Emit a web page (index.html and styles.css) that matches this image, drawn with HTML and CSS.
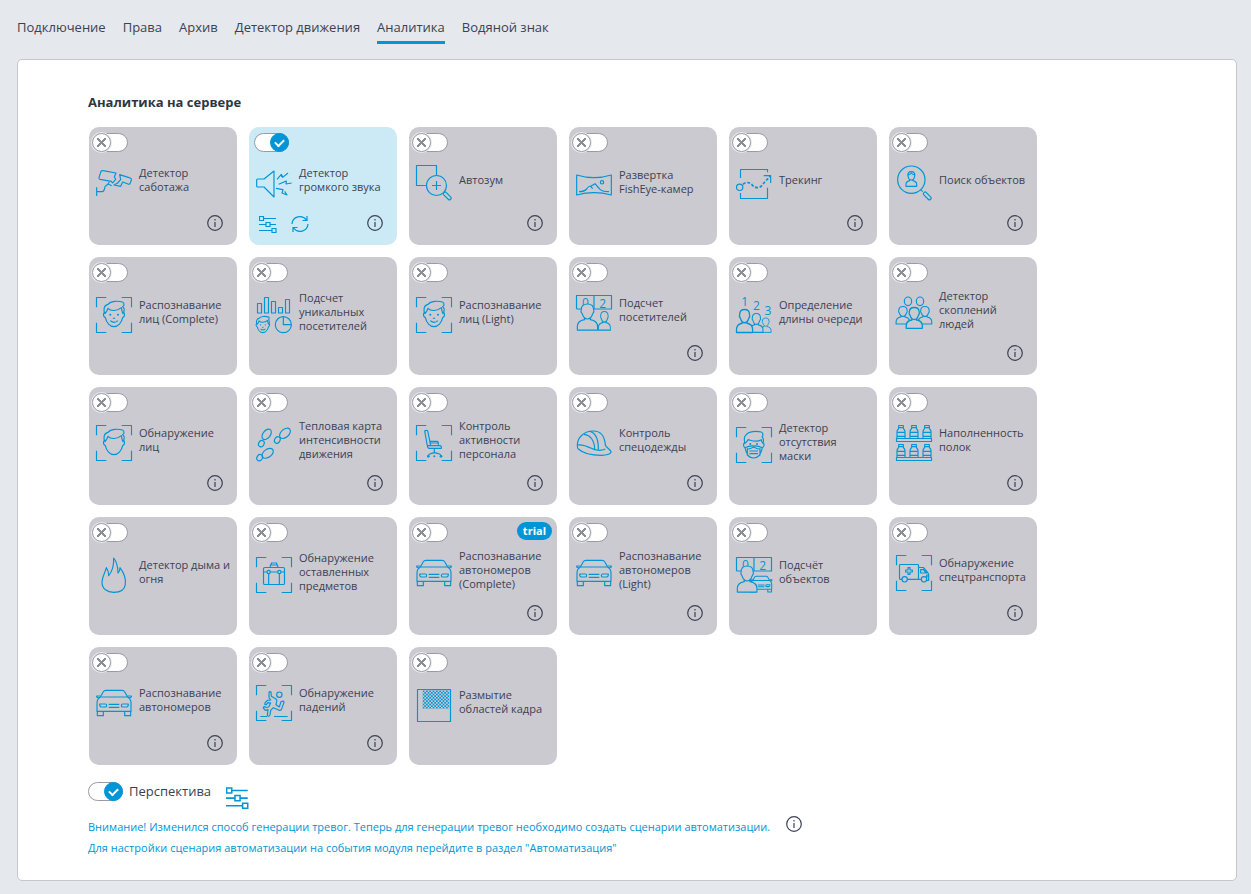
FILE: index.html
```html
<!DOCTYPE html>
<html lang="ru">
<head>
<meta charset="utf-8">
<title>Аналитика</title>
<link rel="stylesheet" href="styles.css">
</head>
<body>
<svg class="sprite" aria-hidden="true">
  <defs>
    <pattern id="checker" width="10" height="10" patternUnits="userSpaceOnUse"><path class="solid" d="M0 0h5v5h-5zM5 5h5v5h-5z"/></pattern>
    <g id="frame"><path d="M1.500 31V1.500H31M77 1.500H106.500V31M106.500 77V106.500H77M31 106.500H1.500V77"/></g>
    <g id="head">
      <path d="M26 46C20 49 22 60 28 62C31 77 42 89 54 89C66 89 77 77 80 62C86 60 88 49 82 46"/>
      <path d="M27 50C31 46 33 41 36 34C44 44 64 42 76 32C77 40 79 46 81 50C86 42 86 32 80 29C86 24 85 17 79 15C66 11 44 12 36 22C24 24 21 38 27 50Z"/>
    </g>
    <g id="face">
      <use href="#head"/>
      <path d="M43 71Q54 81 66 71M51 63Q54 65 57 63"/>
      <circle class="solid" cx="43" cy="53" r="3"/><circle class="solid" cx="66" cy="53" r="3"/>
    </g>
    <g id="person">
      <path class="mask" d="M24 45V50C10 52 2 60 2 72V82H64V72C64 60 56 52 42 50V45"/>
      <path class="mask" d="M33 2C19 2 14 9 14 20C12 24 15 30 17 32C20 42 27 48 33 48C39 48 46 42 49 32C51 30 54 24 52 20C52 9 47 2 33 2Z"/>
    </g>
    <g id="car">
      <path class="mask" d="M13 36L22 20Q24 16 30 16H78Q84 16 86 20L95 36Q105 42 105 54V79H3V54Q3 42 13 36Z"/>
      <path d="M13 36H95M10 40L2 36V33H13M98 40L106 36V33H95M4 79V92H22V79M86 79V92H104V79M38 58H70M38 67H70"/>
      <path d="M11 57H28Q32 57 32 62Q32 66 28 66H16Q11 66 11 57ZM97 57H80Q76 57 76 62Q76 66 80 66H92Q97 66 97 57Z"/>
    </g>
    <g id="bottle">
      <path d="M8 1.500H22V8H8ZM8 8C8 14 3 13 3 20V40M22 8C22 14 27 13 27 20V40M3 22H27M3 34H27"/>
    </g>
    <g id="shelf">
      <use href="#bottle"/><use href="#bottle" x="39"/><use href="#bottle" x="78"/>
      <path d="M1.500 40.500H106.500V49.500H1.500Z"/>
    </g>
    <g id="board">
      <path d="M1.500 42V1.500H106.500V42H1.500M54 1.500V42"/>
      <text x="28" y="36">0</text><text x="80" y="38">2</text>
    </g>
    <g id="lens">
      <rect x="-5" y="0" width="10" height="28" rx="4" transform="translate(84 83) rotate(-45)"/>
    </g>
    <symbol id="i-info" viewBox="0 0 16 16"><circle cx="8" cy="8" r="7.300"/><path d="M8 7V12M8 4V5.500"/></symbol>
    <symbol id="i-sliders" viewBox="0 0 18 18"><path d="M.5 1.500H4.500V5.500H.5ZM4.500 3.500H17M0 9.500H7M7 7.500H11V11.500H7ZM11 9.500H17M0 15.500H13M13 13.500H17V17.500H13Z"/></symbol>
    <symbol id="i-refresh" viewBox="0 0 18 18"><path d="M1 9C1.500 1.500 11 -1 15.500 5M16 1V5.500H11.500M17 9C16.500 16.500 7 19 2.500 13M2 17V12.500H6.500"/></symbol>
  </defs>
</svg>

<nav class="tabs">
  <a class="tab" href="#">Подключение</a>
  <a class="tab" href="#">Права</a>
  <a class="tab" href="#">Архив</a>
  <a class="tab" href="#">Детектор движения</a>
  <a class="tab tab-active" href="#" aria-current="page">Аналитика</a>
  <a class="tab" href="#">Водяной знак</a>
</nav>

<main class="panel">
  <h1 class="title">Аналитика на сервере</h1>
  <div class="grid">

    <section class="card has-info">
      <input class="toggle" type="checkbox" id="m1">
      <div class="body">
        <svg class="icon" viewBox="0 0 108 108"><path d="M15 19Q17 16 21 17L60 24L55 35L59 43L50 54L46 49L12 43Q8 42 9 38Z"/><path d="M71 29L99 38Q108 40 106 45L102 56Q100 59 96 57L80 51L74 64L54 60L65 54L74 44Z"/><path d="M40 51L36 57L47 62M36 57L27 65Q25 80 18 80H2M2 67V93"/></svg>
        <label class="name" for="m1">Детектор саботажа</label>
      </div>
      <div class="foot"><button class="tool info" type="button" aria-label="Информация"><svg class="glyph"><use href="#i-info"/></svg></button></div>
    </section>

    <section class="card card-on has-info">
      <input class="toggle" type="checkbox" id="m2" checked>
      <div class="body">
        <svg class="icon" viewBox="0 0 108 108"><path d="M5 42H24L54 18V96L24 66H5Q2 66 2 63V45Q2 42 5 42Z"/><path d="M63 43L76 28L80 37L96 24M75 31L80 37M107 54L90 57L91 48L68 58M60 70L81 74L78 84L93 90L86 79"/></svg>
        <label class="name" for="m2">Детектор громкого звука</label>
      </div>
      <div class="foot">
        <button class="tool" type="button" aria-label="Настройки"><svg class="glyph-wide"><use href="#i-sliders"/></svg></button>
        <button class="tool" type="button" aria-label="Обновить"><svg class="glyph-wide"><use href="#i-refresh"/></svg></button>
        <button class="tool info" type="button" aria-label="Информация"><svg class="glyph"><use href="#i-info"/></svg></button>
      </div>
    </section>

    <section class="card has-info">
      <input class="toggle" type="checkbox" id="m3">
      <div class="body">
        <svg class="icon" viewBox="0 0 108 108"><path d="M32 61.500H1.500V1.500H61.500V31M61.500 48V75M48 61.500H75"/><circle cx="61.500" cy="61.500" r="30"/><use href="#lens"/></svg>
        <label class="name" for="m3">Автозум</label>
      </div>
      <div class="foot"><button class="tool info" type="button" aria-label="Информация"><svg class="glyph"><use href="#i-info"/></svg></button></div>
    </section>

    <section class="card">
      <input class="toggle" type="checkbox" id="m4">
      <div class="body">
        <svg class="icon" viewBox="0 0 108 108"><path d="M2 24Q54 40 106 24V84Q54 70 2 84ZM9 74Q25 74 32 66Q38 56 44 58L50 65M44 58L57 50L71 66Q77 74 99 74"/><circle cx="78" cy="46" r="5"/></svg>
        <label class="name" for="m4">Развертка FishEye-камер</label>
      </div>
      <div class="foot"></div>
    </section>

    <section class="card has-info">
      <input class="toggle" type="checkbox" id="m5">
      <div class="body">
        <svg class="icon" viewBox="0 0 108 108"><path d="M13.500 39V13.500H94.500V22M13.500 84V100.500H94.500V68M83 32H104V54"/><circle cx="11" cy="67" r="9.500"/><path class="dashed" d="M21 58C28 51 40 50 48 59C56 70 72 72 80 58L102 34"/></svg>
        <label class="name" for="m5">Трекинг</label>
      </div>
      <div class="foot"><button class="tool info" type="button" aria-label="Информация"><svg class="glyph"><use href="#i-info"/></svg></button></div>
    </section>

    <section class="card has-info">
      <input class="toggle" type="checkbox" id="m6">
      <div class="body">
        <svg class="icon" viewBox="0 0 108 108"><circle cx="46" cy="44" r="41"/><path d="M46 20C38 20 34 25 36 33C37 40 42 45 46 45C50 45 55 40 56 33C58 25 54 20 46 20ZM41 44V47C33 49 30 52 30 58V64H62V58C62 52 59 49 51 47V44M36 30Q44 28 46 24Q50 29 56 30M74 74L80 80"/><use href="#lens"/></svg>
        <label class="name" for="m6">Поиск объектов</label>
      </div>
      <div class="foot"><button class="tool info" type="button" aria-label="Информация"><svg class="glyph"><use href="#i-info"/></svg></button></div>
    </section>

    <section class="card">
      <input class="toggle" type="checkbox" id="m7">
      <div class="body">
        <svg class="icon" viewBox="0 0 108 108"><use href="#frame"/><use href="#face"/></svg>
        <label class="name" for="m7">Распознавание лиц (Complete)</label>
      </div>
      <div class="foot"></div>
    </section>

    <section class="card">
      <input class="toggle" type="checkbox" id="m8">
      <div class="body">
        <svg class="icon" viewBox="0 0 108 108"><path d="M4.500 19.500H16.500V48H4.500ZM25.500 1.500H37.500V48H25.500ZM46.500 13.500H58.500V48H46.500ZM67.500 31.500H79.500V48H67.500ZM88.500 7.500H100.500V48H88.500Z"/><circle cx="82" cy="83" r="24"/><path d="M82 59V83H106"/><g class="fine" transform="translate(-14 50) scale(.64)"><use href="#face"/></g></svg>
        <label class="name" for="m8">Подсчет уникальных посетителей</label>
      </div>
      <div class="foot"></div>
    </section>

    <section class="card">
      <input class="toggle" type="checkbox" id="m9">
      <div class="body">
        <svg class="icon" viewBox="0 0 108 108"><use href="#frame"/><use href="#face"/></svg>
        <label class="name" for="m9">Распознавание лиц (Light)</label>
      </div>
      <div class="foot"></div>
    </section>

    <section class="card has-info">
      <input class="toggle" type="checkbox" id="m10">
      <div class="body">
        <svg class="icon" viewBox="0 0 108 108"><use href="#board"/><g class="fine" transform="translate(66 48) scale(.58 .7)"><use href="#person"/></g><g transform="translate(2 25) scale(.98)"><use href="#person"/></g></svg>
        <label class="name" for="m10">Подсчет посетителей</label>
      </div>
      <div class="foot"><button class="tool info" type="button" aria-label="Информация"><svg class="glyph"><use href="#i-info"/></svg></button></div>
    </section>

    <section class="card">
      <input class="toggle" type="checkbox" id="m11">
      <div class="body">
        <svg class="icon" viewBox="0 0 108 108"><text x="26" y="26">1</text><text x="61" y="38">2</text><text x="96" y="53">3</text><g class="fine" transform="translate(72 62) scale(.52 .54)"><use href="#person"/></g><g class="fine" transform="translate(40 48) scale(.64 .71)"><use href="#person"/></g><g class="fine" transform="translate(0 36) scale(.78 .86)"><use href="#person"/></g></svg>
        <label class="name" for="m11">Определение длины очереди</label>
      </div>
      <div class="foot"></div>
    </section>

    <section class="card has-info">
      <input class="toggle" type="checkbox" id="m12">
      <div class="body">
        <svg class="icon" viewBox="0 0 108 108"><ellipse cx="36" cy="19" rx="11" ry="13"/><ellipse cx="72" cy="19" rx="11" ry="13"/><g class="fine" transform="translate(-1 33) scale(.66)"><use href="#person"/></g><g class="fine" transform="translate(65 33) scale(.66)"><use href="#person"/></g><g class="fine" transform="translate(29 36) scale(.78)"><use href="#person"/></g></svg>
        <label class="name name-narrow" for="m12">Детектор скоплений людей</label>
      </div>
      <div class="foot"><button class="tool info" type="button" aria-label="Информация"><svg class="glyph"><use href="#i-info"/></svg></button></div>
    </section>

    <section class="card has-info">
      <input class="toggle" type="checkbox" id="m13">
      <div class="body">
        <svg class="icon" viewBox="0 0 108 108"><use href="#frame"/><use href="#head"/></svg>
        <label class="name" for="m13">Обнаружение лиц</label>
      </div>
      <div class="foot"><button class="tool info" type="button" aria-label="Информация"><svg class="glyph"><use href="#i-info"/></svg></button></div>
    </section>

    <section class="card has-info">
      <input class="toggle" type="checkbox" id="m14">
      <div class="body">
        <svg class="icon" viewBox="0 0 108 108"><ellipse cx="32" cy="28" rx="18" ry="11" transform="rotate(-52 32 28)"/><ellipse cx="16" cy="56" rx="10" ry="8" transform="rotate(-60 16 56)"/><ellipse cx="87" cy="25" rx="19" ry="12" transform="rotate(-42 87 25)"/><ellipse cx="64" cy="45" rx="10" ry="8" transform="rotate(-60 64 45)"/><ellipse cx="35" cy="85" rx="19" ry="12" transform="rotate(-36 35 85)"/><ellipse cx="11" cy="98" rx="10" ry="8" transform="rotate(-60 11 98)"/></svg>
        <label class="name" for="m14">Тепловая карта интенсивности движения</label>
      </div>
      <div class="foot"><button class="tool info" type="button" aria-label="Информация"><svg class="glyph"><use href="#i-info"/></svg></button></div>
    </section>

    <section class="card has-info">
      <input class="toggle" type="checkbox" id="m15">
      <div class="body">
        <svg class="icon" viewBox="0 0 108 108"><use href="#frame"/><path d="M26 18Q30 15 35 17L44 62H34ZM40 49H63Q67 49 67 53V60M44 54H66M34 62H72Q76 62 76 66V70H38Q35 68 34 62M55 70V83M37 93Q38 87 44 86L55 83L67 86Q74 87 75 93"/><circle class="solid" cx="37" cy="94" r="4"/><circle class="solid" cx="55" cy="94" r="3"/><circle class="solid" cx="75" cy="94" r="4"/></svg>
        <label class="name" for="m15">Контроль активности персонала</label>
      </div>
      <div class="foot"><button class="tool info" type="button" aria-label="Информация"><svg class="glyph"><use href="#i-info"/></svg></button></div>
    </section>

    <section class="card has-info">
      <input class="toggle" type="checkbox" id="m16">
      <div class="body">
        <svg class="icon" viewBox="0 0 108 108"><path d="M4 60C4 38 24 18 52 18C76 18 86 34 88 60C90 68 104 74 105 80C106 86 94 91 76 91C46 91 20 84 7 72C3 68 4 62 4 60ZM4 60C14 58 34 64 46 70C58 77 76 78 88 72M24 28C44 30 56 48 56 74M42 19C60 24 68 44 67 77"/></svg>
        <label class="name" for="m16">Контроль спецодежды</label>
      </div>
      <div class="foot"><button class="tool info" type="button" aria-label="Информация"><svg class="glyph"><use href="#i-info"/></svg></button></div>
    </section>

    <section class="card">
      <input class="toggle" type="checkbox" id="m17">
      <div class="body">
        <svg class="icon" viewBox="0 0 108 108"><use href="#frame"/><path d="M26 47C21 50 22 60 27 62C30 80 40 93 53 93C66 93 76 80 79 62C85 60 86 50 81 47M27 49C24 38 24 28 30 24C38 12 62 12 76 15C82 18 82 26 78 29C83 34 83 42 81 49C78 46 76 42 76 38C60 48 46 40 36 38C34 44 30 46 27 49ZM27 62Q40 56 53 57Q66 56 79 62M34 65C38 68 42 66 53 60C64 66 68 68 72 65V84Q62 93 53 93Q42 93 34 84ZM40 72H66M40 80H66"/><circle class="solid" cx="43" cy="51" r="3"/><circle class="solid" cx="63" cy="51" r="3"/></svg>
        <label class="name name-narrow" for="m17">Детектор отсутствия маски</label>
      </div>
      <div class="foot"></div>
    </section>

    <section class="card has-info">
      <input class="toggle" type="checkbox" id="m18">
      <div class="body">
        <svg class="icon" viewBox="0 0 108 108"><use href="#shelf"/><use href="#shelf" y="57"/></svg>
        <label class="name" for="m18">Наполненность полок</label>
      </div>
      <div class="foot"><button class="tool info" type="button" aria-label="Информация"><svg class="glyph"><use href="#i-info"/></svg></button></div>
    </section>

    <section class="card">
      <input class="toggle" type="checkbox" id="m19">
      <div class="body">
        <svg class="icon" viewBox="0 0 108 108"><path d="M53 3C62 14 66 28 66 48C70 44 72 38 72 32C84 48 90 66 88 82C86 98 72 106 53 106C34 106 18 96 18 76C18 58 28 46 31 32C35 38 38 46 38 56C48 44 54 26 53 3Z"/></svg>
        <label class="name" for="m19">Детектор дыма и огня</label>
      </div>
      <div class="foot"></div>
    </section>

    <section class="card">
      <input class="toggle" type="checkbox" id="m20">
      <div class="body">
        <svg class="icon" viewBox="0 0 108 108"><use href="#frame"/><rect x="22.500" y="31.500" width="63" height="51" rx="4"/><path d="M43 31V24H65V31M46 24V18H62V24M22 45H33M43 45H65M75 45H86M38 50V82M70 50V82"/><circle cx="38" cy="45" r="5"/><circle cx="70" cy="45" r="5"/></svg>
        <label class="name" for="m20">Обнаружение оставленных предметов</label>
      </div>
      <div class="foot"></div>
    </section>

    <section class="card has-info">
      <input class="toggle" type="checkbox" id="m21">
      <span class="badge">trial</span>
      <div class="body">
        <svg class="icon" viewBox="0 0 108 108"><use href="#car"/></svg>
        <label class="name" for="m21">Распознавание автономеров (Complete)</label>
      </div>
      <div class="foot"><button class="tool info" type="button" aria-label="Информация"><svg class="glyph"><use href="#i-info"/></svg></button></div>
    </section>

    <section class="card has-info">
      <input class="toggle" type="checkbox" id="m22">
      <div class="body">
        <svg class="icon" viewBox="0 0 108 108"><use href="#car"/></svg>
        <label class="name" for="m22">Распознавание автономеров (Light)</label>
      </div>
      <div class="foot"><button class="tool info" type="button" aria-label="Информация"><svg class="glyph"><use href="#i-info"/></svg></button></div>
    </section>

    <section class="card">
      <input class="toggle" type="checkbox" id="m23">
      <div class="body">
        <svg class="icon" viewBox="0 0 108 108"><use href="#board"/><g class="fine" transform="translate(42 48) scale(.62)"><use href="#car"/></g><g transform="translate(2 25) scale(.95 .98)"><use href="#person"/></g></svg>
        <label class="name" for="m23">Подсчёт объектов</label>
      </div>
      <div class="foot"></div>
    </section>

    <section class="card has-info">
      <input class="toggle" type="checkbox" id="m24">
      <div class="body">
        <svg class="icon" viewBox="0 0 108 108"><use href="#frame"/><path d="M18 73H13Q10.500 73 10.500 70V31Q10.500 28.500 13 28.500H64Q67.500 28.500 67.500 31V73H34M67 37.500H82L96 54Q98 57 98 60V76H92M76 73H67M74 44H82L91 54H74ZM98 60H92V66H98M36 38H42V45H49V51H42V58H36V51H29V45H36Z"/><circle cx="26" cy="73" r="8"/><circle cx="84" cy="73" r="8"/></svg>
        <label class="name" for="m24">Обнаружение спецтранспорта</label>
      </div>
      <div class="foot"><button class="tool info" type="button" aria-label="Информация"><svg class="glyph"><use href="#i-info"/></svg></button></div>
    </section>

    <section class="card has-info">
      <input class="toggle" type="checkbox" id="m25">
      <div class="body">
        <svg class="icon" viewBox="0 0 108 108"><use href="#car"/></svg>
        <label class="name" for="m25">Распознавание автономеров</label>
      </div>
      <div class="foot"><button class="tool info" type="button" aria-label="Информация"><svg class="glyph"><use href="#i-info"/></svg></button></div>
    </section>

    <section class="card has-info">
      <input class="toggle" type="checkbox" id="m26">
      <div class="body">
        <svg class="icon" viewBox="0 0 108 108"><use href="#frame"/><circle cx="70" cy="29" r="8"/><path d="M39 22Q42 18 45 21L46 34L60 42Q64 45 62 50L60 59L70 66L75 50Q84 46 84 52L76 74Q73 78 68 75L52 68L44 76L42 90Q38 97 34 91L36 74L28 76L22 69Q24 62 29 67L38 66L44 54L36 53L31 59Q24 60 27 54L34 46L44 45L39 38ZM13 94.500H33M54 94.500H95"/></svg>
        <label class="name" for="m26">Обнаружение падений</label>
      </div>
      <div class="foot"><button class="tool info" type="button" aria-label="Информация"><svg class="glyph"><use href="#i-info"/></svg></button></div>
    </section>

    <section class="card">
      <input class="toggle" type="checkbox" id="m27">
      <div class="body">
        <svg class="icon" viewBox="0 0 108 108"><path d="M4.500 7.500H103.500V103.500H4.500Z"/><rect class="checker" x="20" y="10" width="80" height="55"/></svg>
        <label class="name" for="m27">Размытие областей кадра</label>
      </div>
      <div class="foot"></div>
    </section>
  </div>

  <div class="perspective">
    <input class="toggle toggle-inline" type="checkbox" id="perspective" checked>
    <label for="perspective">Перспектива</label>
    <button class="tool tool-large" type="button" aria-label="Настройки перспективы"><svg class="glyph-large"><use href="#i-sliders"/></svg></button>
  </div>

  <div class="notice">
    <p class="notice-text">Внимание! Изменился способ генерации тревог. Теперь для генерации тревог необходимо создать сценарии автоматизации.<br>Для настройки сценария автоматизации на события модуля перейдите в раздел "Автоматизация"</p>
    <button class="tool notice-info" type="button" aria-label="Информация"><svg class="glyph"><use href="#i-info"/></svg></button>
  </div>
</main>
</body>
</html>
```

FILE: styles.css
```css
:root {
  --blue: #0095d6;
  --ink: #3b4154;
  --card: #cbcad0;
  --line: #c6c6ce;
}

*,
*::before,
*::after {
  box-sizing: border-box;
}

body {
  margin: 0;
  padding: 0 14px 13px 17px;
  background: #e5e8ed;
  color: var(--ink);
  font-family: "Open Sans", "Noto Sans", sans-serif;
  font-size: 11px;
  line-height: 14px;
}

.sprite {
  position: absolute;
  width: 0;
  height: 0;
}

.tabs {
  display: flex;
  gap: 17px;
  height: 59px;
  padding-top: 17px;
}

.tab {
  height: 27px;
  color: inherit;
  font-size: 13px;
  line-height: 20px;
  text-decoration: none;
}

.tab-active {
  border-bottom: 3px solid var(--blue);
}

.panel {
  padding: 32px 70px 22px;
  background: #fff;
  border: 1px solid var(--line);
  border-radius: 5px;
}

.title {
  margin: 0 0 15px;
  color: #2f3640;
  font-size: 13px;
  line-height: 20px;
}

.grid {
  display: grid;
  grid-template-columns: repeat(auto-fill, 148px);
  gap: 12px;
  margin: 0 1px;
}

.card {
  position: relative;
  display: flex;
  flex-direction: column;
  min-height: 118px;
  background: var(--card);
  border-radius: 10px;
}

.card-on {
  --card: #cceaf6;
}

.toggle {
  appearance: none;
  position: relative;
  flex: none;
  width: 35px;
  height: 19px;
  margin: 6px 0 0 4px;
  background: #fff;
  border: 1px solid #989aa6;
  border-radius: 10px;
}

.toggle::before {
  content: "";
  position: absolute;
  top: -1px;
  left: -2px;
  width: 19px;
  height: 19px;
  border: 1px solid #989aa6;
  border-radius: 50%;
  background:
    linear-gradient(45deg, transparent 44%, #8b8d99 44%, #8b8d99 56%, transparent 56%) center / 9px 9px no-repeat,
    linear-gradient(-45deg, transparent 44%, #8b8d99 44%, #8b8d99 56%, transparent 56%) center / 9px 9px no-repeat,
    #fff;
  box-shadow: 0 0 0 1px #e9e9ec;
}

.toggle:checked {
  margin-left: 5px;
}

.toggle:checked::before {
  left: 15px;
  background: var(--blue);
  border-color: var(--blue);
  box-shadow: none;
}

.toggle:checked::after {
  content: "";
  position: absolute;
  top: 5px;
  left: 20px;
  width: 9px;
  height: 6px;
  border: solid #fff;
  border-width: 0 0 2px 2px;
  transform: rotate(-45deg);
}

.body {
  display: flex;
  flex: 1;
  align-items: center;
  gap: 7px;
  padding: 0 2px 0 7px;
}

.name-narrow {
  max-width: 80px;
}

.icon {
  flex: none;
  width: 36px;
  height: 42px;
  padding-top: 6px;
  overflow: visible;
  fill: none;
  stroke: var(--blue);
  stroke-width: 3.5px;
  stroke-linejoin: round;
}

.icon text,
.sprite text {
  fill: var(--blue);
  stroke: none;
  font-size: 36px;
  text-anchor: middle;
}

.fine {
  stroke-width: 5px;
}

.mask {
  fill: var(--card);
}

.solid {
  fill: var(--blue);
  stroke: none;
}

.dashed {
  stroke-width: 5px;
  stroke-dasharray: 9 5;
}

.checker {
  fill: url(#checker);
  stroke: none;
}

.foot {
  display: flex;
  align-items: flex-start;
  gap: 14px;
  height: 33px;
  padding: 0 14px 0 10px;
}

.has-info .foot {
  height: 37px;
  padding-top: 7px;
}

.tool {
  display: flex;
  padding: 0;
  background: none;
  border: 0;
  color: var(--blue);
}

.tool svg {
  fill: none;
  stroke: currentColor;
  stroke-width: 1.2px;
}

.info {
  margin-left: auto;
  color: var(--ink);
}

.glyph {
  width: 16px;
  height: 16px;
}

.glyph-wide {
  width: 18px;
  height: 18px;
}

.glyph-large {
  width: 23px;
  height: 23px;
}

.badge {
  position: absolute;
  top: 5px;
  right: 5px;
  padding: 0 6px;
  border-radius: 9px;
  background: var(--blue);
  color: #fff;
  font-weight: bold;
  line-height: 18px;
}

.perspective {
  display: flex;
  align-items: flex-start;
  gap: 6px;
  margin-top: 17px;
  font-size: 13px;
  line-height: 19px;
}

.toggle-inline,
.toggle-inline:checked {
  margin: 0;
}

.tool-large {
  margin: 4px 0 0 9px;
}

.notice {
  display: flex;
  align-items: flex-start;
  gap: 16px;
  margin-top: 7px;
  color: var(--blue);
}

.notice-text {
  margin: 0;
  line-height: 21px;
}

.notice-info {
  color: var(--ink);
}
```
